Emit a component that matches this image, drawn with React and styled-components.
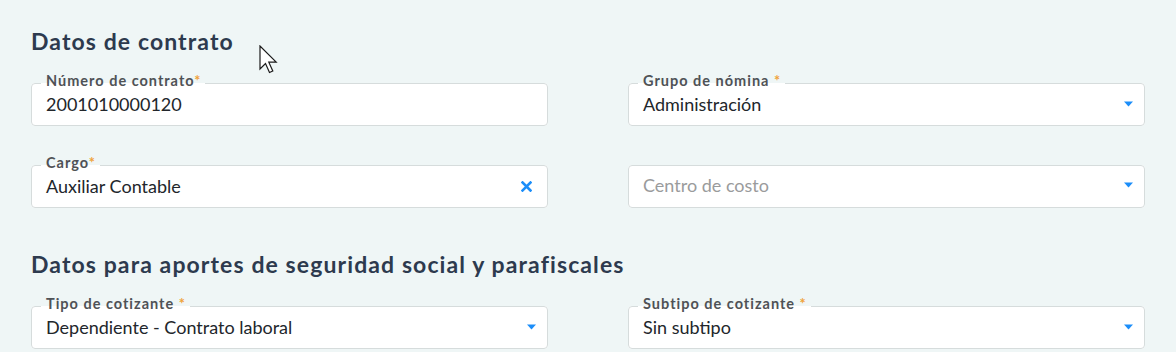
import React from 'react';
import styled, { createGlobalStyle } from 'styled-components';

const GlobalStyle = createGlobalStyle`
  html, body {
    margin: 0;
    padding: 0;
    background: #eff6f6;
  }
  body {
    font-family: Lato, "Liberation Sans", sans-serif;
  }
`;

const Page = styled.div`
  position: relative;
  width: 1176px;
  height: 352px;
  box-sizing: border-box;
  padding: 27px 31px 0;
  background: #eff6f6;
  overflow: hidden;
`;

const Section = styled.section`
  & + & {
    margin-top: 42px;
  }
`;

const SectionTitle = styled.h2`
  margin: 0 0 19px;
  font-size: 23px;
  line-height: 28px;
  font-weight: 700;
  letter-spacing: 1.1px;
  color: #2d3a4e;
`;

const FieldsGrid = styled.div`
  display: grid;
  grid-template-columns: 517px 517px;
  column-gap: 80px;
  row-gap: 30px;
  align-items: end;
`;

const Field = styled.fieldset`
  margin: 0;
  min-width: 0;
  padding: ${({ $bare }) => ($bare ? '8px 14px 11px' : '0 14px 10px')};
  border: 1px solid #d6dcdc;
  border-radius: 4px;
  background: #fff;
  display: flex;
  align-items: center;
  gap: 10px;
  box-sizing: border-box;
`;

const Label = styled.legend`
  margin-left: -5px;
  padding: 0 4px 5px 5px;
  font-size: 14.5px;
  line-height: 14px;
  font-weight: 700;
  letter-spacing: 1px;
  color: #4f5256;
`;

const Required = styled.span`
  color: #f0a23a;
`;

const Value = styled.div`
  flex: 1;
  font-size: 18px;
  line-height: 22px;
  color: ${({ $placeholder }) => ($placeholder ? '#9a9b9c' : '#22262b')};
  white-space: nowrap;
`;

const IconSlot = styled.span`
  display: flex;
  align-items: center;
  margin-right: ${({ $offset }) => $offset || 0}px;
  color: #1c8ef9;
`;

const Cursor = styled.svg`
  position: absolute;
  left: 259px;
  top: 45px;
`;

const Caret = () => (
  <svg width="9" height="6" viewBox="0 0 9 6">
    <path d="M0 0.5 H9 L4.5 5.5 Z" fill="currentColor" />
  </svg>
);

const Clear = () => (
  <svg width="11" height="11" viewBox="0 0 11 11">
    <path d="M1.5 1.5 L9.5 9.5 M9.5 1.5 L1.5 9.5" stroke="currentColor" strokeWidth="2.6" strokeLinecap="square" />
  </svg>
);

const FormField = ({ label, required, space, value, placeholder, icon }) => (
  <Field $bare={!label}>
    {label && (
      <Label>
        {label}
        {required && <Required>{space ? ' *' : '*'}</Required>}
      </Label>
    )}
    <Value $placeholder={!value}>{value || placeholder}</Value>
    {icon === 'caret' && <IconSlot $offset={-3}><Caret /></IconSlot>}
    {icon === 'clear' && <IconSlot $offset={1}><Clear /></IconSlot>}
  </Field>
);

const App = () => (
  <>
    <GlobalStyle />
    <Page>
      <Section>
        <SectionTitle>Datos de contrato</SectionTitle>
        <FieldsGrid>
          <FormField label="Número de contrato" required value="2001010000120" />
          <FormField label="Grupo de nómina" required space value="Administración" icon="caret" />
          <FormField label="Cargo" required value="Auxiliar Contable" icon="clear" />
          <FormField placeholder="Centro de costo" icon="caret" />
        </FieldsGrid>
      </Section>
      <Section>
        <SectionTitle>Datos para aportes de seguridad social y parafiscales</SectionTitle>
        <FieldsGrid>
          <FormField label="Tipo de cotizante" required space value="Dependiente - Contrato laboral" icon="caret" />
          <FormField label="Subtipo de cotizante" required space value="Sin subtipo" icon="caret" />
        </FieldsGrid>
      </Section>
      <Cursor width="20" height="29" viewBox="0 0 20 29">
        <path
          d="M1 1 V24 L6.5 18.5 L10.5 27.5 L13.8 26 L9.8 17.2 H17.2 Z"
          fill="#fff"
          stroke="#1b1b1b"
          strokeWidth="1.2"
          strokeLinejoin="miter"
        />
      </Cursor>
    </Page>
  </>
);

export default App;
